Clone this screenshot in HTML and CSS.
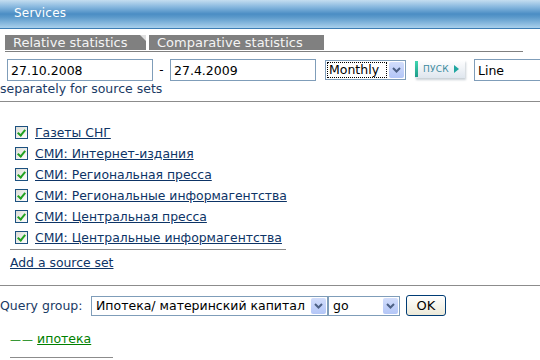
FILE: index.html
```html
<!DOCTYPE html>
<html lang="en">
<head>
    <meta charset="UTF-8">
    <title>Services</title>
    <link rel="stylesheet" href="styles.css">
</head>
<body>
    <div class="header">Services</div>

    <div class="tabs">
        <div class="tab tab-active">Relative statistics</div>
        <div class="tab">Comparative statistics</div>
    </div>

    <div class="date-row">
        <input type="text" class="field field-date" value="27.10.2008">
        <span class="dash">-</span>
        <input type="text" class="field field-date" value="27.4.2009">
        <div class="select select-period">
            <span class="select-value focused">Monthly</span>
            <span class="select-arrow"><svg width="9" height="6" viewBox="0 0 9 6"><path d="M1 1 L4.5 4.5 L8 1" fill="none" stroke="#4d6185" stroke-width="2"/></svg></span>
        </div>
        <button class="button-go">
            <span class="go-bar"></span>
            <span class="go-text">ПУСК</span>
            <svg width="5" height="8" viewBox="0 0 5 8"><path d="M0 0 L5 4 L0 8 Z" fill="#1fa6a0"/></svg>
        </button>
        <input type="text" class="field field-chart" value="Line">
    </div>
    <div class="note">separately for source sets</div>

    <hr class="rule rule-full">

    <ul class="source-list">
        <li><span class="check"></span><a href="#">Газеты СНГ</a></li>
        <li><span class="check"></span><a href="#">СМИ: Интернет-издания</a></li>
        <li><span class="check"></span><a href="#">СМИ: Региональная пресса</a></li>
        <li><span class="check"></span><a href="#">СМИ: Региональные информагентства</a></li>
        <li><span class="check"></span><a href="#">СМИ: Центральная пресса</a></li>
        <li><span class="check"></span><a href="#">СМИ: Центральные информагентства</a></li>
    </ul>

    <hr class="rule rule-list">
    <a href="#" class="add-link">Add a source set</a>
    <hr class="rule rule-full rule-query">

    <div class="query-row">
        <span class="query-label">Query group:</span>
        <div class="select select-group">
            <span class="select-value">Ипотека/ материнский капитал</span>
            <span class="select-arrow"><svg width="9" height="6" viewBox="0 0 9 6"><path d="M1 1 L4.5 4.5 L8 1" fill="none" stroke="#4d6185" stroke-width="2"/></svg></span>
        </div>
        <div class="select select-action">
            <span class="select-value">go</span>
            <span class="select-arrow"><svg width="9" height="6" viewBox="0 0 9 6"><path d="M1 1 L4.5 4.5 L8 1" fill="none" stroke="#4d6185" stroke-width="2"/></svg></span>
        </div>
        <button class="button-ok">OK</button>
    </div>

    <div class="query-item"><span class="dashes">—&#8202;—</span> <a href="#">ипотека</a></div>
    <hr class="rule rule-short">
</body>
</html>
```

FILE: styles.css
```css
:root {
    --border-xp: #7f9db9;
    --link-blue: #0d3466;
    --tab-gray: #808080;
    --rule-gray: #8c8c8c;
}

body {
    margin: 0;
    font-family: "DejaVu Sans", Verdana, sans-serif;
    font-size: 12.5px;
    color: #1a3a64;
    background: #ffffff;
    overflow: hidden;
}

.header {
    height: 28px;
    line-height: 27px;
    padding-left: 14px;
    color: #ffffff;
    font-size: 12px;
    letter-spacing: 0.2px;
    background: linear-gradient(#c4ddf0 0%, #86b7de 25%, #4b8dc4 50%, #5c9acb 62%, #a9d0ec 100%);
    border-bottom: 1px solid #3d7db4;
}

.tabs {
    display: flex;
    gap: 3px;
    margin: 6px 17px 0 5px;
    border-bottom: 1px solid var(--tab-gray);
    height: 16px;
}

.tab {
    position: relative;
    background: var(--tab-gray);
    color: #f4f4f4;
    font-size: 13px;
    line-height: 15px;
    height: 15px;
    padding: 0 8px;
}

.tab-active {
    box-sizing: border-box;
    width: 141px;
}

.tab-active + .tab {
    box-sizing: border-box;
    width: 175px;
}

.tab-active::after {
    content: "";
    position: absolute;
    top: 0;
    right: 0;
    border-style: solid;
    border-width: 0 6px 6px 0;
    border-color: transparent #e0e0e0 transparent transparent;
}

.date-row {
    display: flex;
    align-items: center;
    margin: 6px 0 0 7px;
    height: 23px;
}

.date-row > * {
    flex: none;
}

.field {
    box-sizing: border-box;
    height: 22px;
    border: 1px solid var(--border-xp);
    font-family: "DejaVu Sans", Verdana, sans-serif;
    font-size: 12.5px;
    color: #000000;
    padding: 1px 3px 0;
    margin: 0;
}

.field-date {
    width: 146px;
}

.dash {
    color: #000000;
    width: 17px;
    text-align: center;
    font-size: 12px;
}

.field-chart {
    width: 80px;
    margin-left: 9px;
}

.select {
    box-sizing: border-box;
    display: flex;
    align-items: center;
    height: 20px;
    border: 1px solid var(--border-xp);
    background: #ffffff;
    color: #000000;
    font-size: 12.5px;
}

.select-value {
    flex: 1;
    padding-left: 4px;
    white-space: nowrap;
    overflow: hidden;
}

.select-value.focused {
    flex: none;
    width: 58px;
    margin: 1px;
    padding-left: 2px;
    outline: 1px dotted #000000;
    outline-offset: -1px;
    line-height: 16px;
}

.select-arrow {
    display: flex;
    flex: none;
    align-items: center;
    justify-content: center;
    width: 15px;
    height: 16px;
    margin: 1px 1px 1px auto;
    border-radius: 2px;
    background: linear-gradient(#d2ddfb, #b3c6f7);
}

.select-period {
    width: 81px;
    margin-left: 9px;
}

.button-go {
    display: flex;
    align-items: center;
    gap: 5px;
    width: 50px;
    height: 18px;
    margin: -2px 0 0 9px;
    padding: 0 4px 0 0;
    border: none;
    background: linear-gradient(#ffffff, #dfe6ee);
    box-shadow: 1px 2px 2px #c9d0d6;
    cursor: pointer;
}

.go-bar {
    width: 3px;
    height: 16px;
    background: linear-gradient(#3fd6b0, #1e9c8a);
}

.go-text {
    font-family: "DejaVu Sans", Verdana, sans-serif;
    font-size: 9px;
    color: #3a8a9e;
    letter-spacing: 0.2px;
}

.note {
    line-height: 16px;
}

.rule {
    border: none;
    height: 1px;
    background: var(--rule-gray);
    margin: 0;
}

.rule-full {
    margin-top: 4px;
}

.source-list {
    list-style: none;
    margin: 20px 0 0 15px;
    padding: 0;
}

.source-list li {
    display: flex;
    align-items: center;
    height: 21px;
}

.check {
    box-sizing: border-box;
    flex: none;
    width: 13px;
    height: 13px;
    margin-right: 7px;
    border: 1px solid #1c5180;
    background: linear-gradient(135deg, #dcdcd6, #ffffff);
    position: relative;
}

.check::after {
    content: "";
    position: absolute;
    left: 3px;
    top: 1px;
    width: 3px;
    height: 6px;
    border: solid #21a121;
    border-width: 0 2px 2px 0;
    transform: rotate(40deg);
}

.source-list a,
.add-link {
    color: var(--link-blue);
    text-decoration: underline;
    font-size: 12.4px;
}

.rule-list {
    width: 276px;
    margin: 1px 0 0 10px;
}

.add-link {
    display: block;
    margin: 5px 0 0 10px;
    width: max-content;
}

.rule-query {
    margin-top: 15px;
}

.query-row {
    display: flex;
    align-items: center;
    margin-top: 9px;
    height: 21px;
}

.query-label {
    width: 91px;
}

.select-group {
    width: 237px;
}

.select-action {
    width: 72px;
}

.button-ok {
    box-sizing: border-box;
    width: 40px;
    height: 21px;
    margin-left: 6px;
    border: 1px solid #003c74;
    border-radius: 3px;
    background: linear-gradient(#ffffff, #ece9d8);
    font-family: "DejaVu Sans", Verdana, sans-serif;
    font-size: 13px;
    color: #000000;
    padding: 0;
}

.query-item {
    margin: 15px 0 0 10px;
    color: #008000;
}

.query-item a {
    color: #008000;
}

.dashes {
    font-size: 11px;
}

.rule-short {
    width: 103px;
    margin: 11px 0 0 10px;
}
```
